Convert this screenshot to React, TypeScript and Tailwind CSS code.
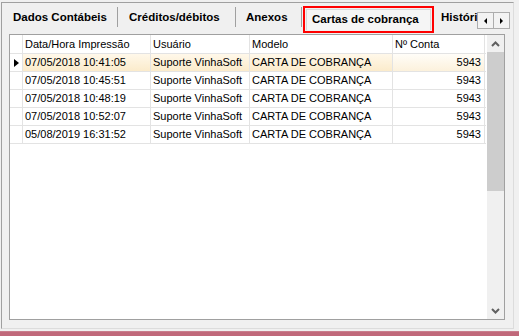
import React from 'react'

type Row = { data: string; usuario: string; modelo: string; conta: string }

const rows: Row[] = [
	{ data: '07/05/2018 10:41:05', usuario: 'Suporte VinhaSoft', modelo: 'CARTA DE COBRANÇA', conta: '5943' },
	{ data: '07/05/2018 10:45:51', usuario: 'Suporte VinhaSoft', modelo: 'CARTA DE COBRANÇA', conta: '5943' },
	{ data: '07/05/2018 10:48:19', usuario: 'Suporte VinhaSoft', modelo: 'CARTA DE COBRANÇA', conta: '5943' },
	{ data: '07/05/2018 10:52:07', usuario: 'Suporte VinhaSoft', modelo: 'CARTA DE COBRANÇA', conta: '5943' },
	{ data: '05/08/2019 16:31:52', usuario: 'Suporte VinhaSoft', modelo: 'CARTA DE COBRANÇA', conta: '5943' },
]

const Chevron = ({ up }: { up?: boolean }) => (
	<svg width="9" height="6" viewBox="0 0 9 6">
		<path d={up ? 'M1 5 L4.5 1.5 L8 5' : 'M1 1 L4.5 4.5 L8 1'} fill="none" stroke="#606060" strokeWidth="2" />
	</svg>
)

function TabStrip() {
	return (
		<div className="h-[31px] flex items-start text-[11.5px] font-bold text-black shrink-0">
			<div className="w-[115px] h-[29px] pl-[11px] flex items-center">Dados Contábeis</div>
			<div className="w-px h-[20px] mt-[4px] bg-[#a0a0a0]" />
			<div className="w-[117px] h-[29px] pl-[11px] flex items-center">Créditos/débitos</div>
			<div className="w-px h-[20px] mt-[4px] bg-[#a0a0a0]" />
			<div className="w-[65px] h-[29px] pl-[10px] flex items-center">Anexos</div>
			<div className="w-px h-[20px] mt-[4px] bg-[#a0a0a0]" />
			{/* aba selecionada com destaque vermelho */}
			<div className="ml-[1px] mt-[3px] w-[131px] h-[27px] border-2 border-[#ff0000] p-px">
				<div className="h-full bg-[#f5f5f5] border-l border-t border-r border-[#d8d8d8] pl-[5px] flex items-center">
					Cartas de cobrança
				</div>
			</div>
			<div className="w-[43px] h-[29px] pl-[7px] flex items-center overflow-hidden whitespace-nowrap">Históricos</div>
			<div className="mt-[9px] flex">
				<div className="w-[17px] h-[17px] border border-[#adadad] bg-[#f3f3f3] flex items-center justify-center">
					<div className="w-0 h-0 border-y-[3px] border-y-transparent border-r-[3px] border-r-black" />
				</div>
				<div className="w-[16px] h-[17px] border border-l-0 border-[#adadad] bg-[#f3f3f3] flex items-center justify-center">
					<div className="w-0 h-0 border-y-[3px] border-y-transparent border-l-[3px] border-l-black" />
				</div>
			</div>
		</div>
	)
}

function Grid() {
	const cell = 'h-full border-r border-[#e3e3e3] flex items-center px-[2px] whitespace-nowrap overflow-hidden'
	return (
		<div className="ml-[7px] w-[496px] h-[286px] border border-[#a0a0a0] bg-white flex text-[11px] text-black">
			<div className="w-[476px] flex flex-col">
				<div className="h-[19px] flex border-b border-[#e3e3e3]">
					<div className={`${cell} w-[13px]`} />
					<div className={`${cell} w-[128px]`}>Data/Hora Impressão</div>
					<div className={`${cell} w-[99px]`}>Usuário</div>
					<div className={`${cell} w-[143px]`}>Modelo</div>
					<div className={`${cell} w-[92px]`}>Nº Conta</div>
				</div>
				{rows.map((r, i) => {
					const sel = i === 0
					const bg = sel ? 'bg-gradient-to-b from-[#fff8ea] to-[#fbebcb]' : ''
					return (
						<div key={i} className="h-[18px] flex border-b border-[#e3e3e3]">
							<div className={`${cell} w-[13px] justify-center`}>
								{sel && <div className="w-0 h-0 border-y-[4px] border-y-transparent border-l-[5px] border-l-black" />}
							</div>
							<div className={`${cell} w-[128px] ${bg}`}>{r.data}</div>
							<div className={`${cell} w-[99px] ${bg}`}>{r.usuario}</div>
							<div className={`${cell} w-[143px] ${bg}`}>{r.modelo}</div>
							<div className={`${cell} w-[92px] justify-end pr-[3px] ${sel ? 'bg-gradient-to-b from-[#fffdf8] to-[#fcf1dc]' : ''}`}>
								{r.conta}
							</div>
						</div>
					)
				})}
			</div>
			<div className="flex-1" />
			<div className="w-[17px] h-full bg-[#f0f0f0] flex flex-col items-center">
				<div className="h-[17px] flex items-center justify-center">
					<Chevron up />
				</div>
				<div className="w-full h-[139px] bg-[#cdcdcd]" />
				<div className="flex-1" />
				<div className="h-[17px] flex items-center justify-center">
					<Chevron />
				</div>
			</div>
		</div>
	)
}

export default function App() {
	return (
		<div
			className="w-[519px] h-[336px] bg-[#f0f0f0] flex flex-col overflow-hidden"
			style={{ fontFamily: '"Liberation Sans", Arial, sans-serif' }}
		>
			<div className="pt-[2px] pl-[1px]">
				<div className="w-[513px] h-[327px] border-l border-t border-[#a0a0a0] border-r border-r-[#dcdcdc] border-b border-b-[#dcdcdc] flex flex-col">
					<TabStrip />
					<Grid />
				</div>
			</div>
			<div className="mt-auto h-[5px] bg-[#c0687a] border-t border-[#c97d8c]" />
		</div>
	)
}
